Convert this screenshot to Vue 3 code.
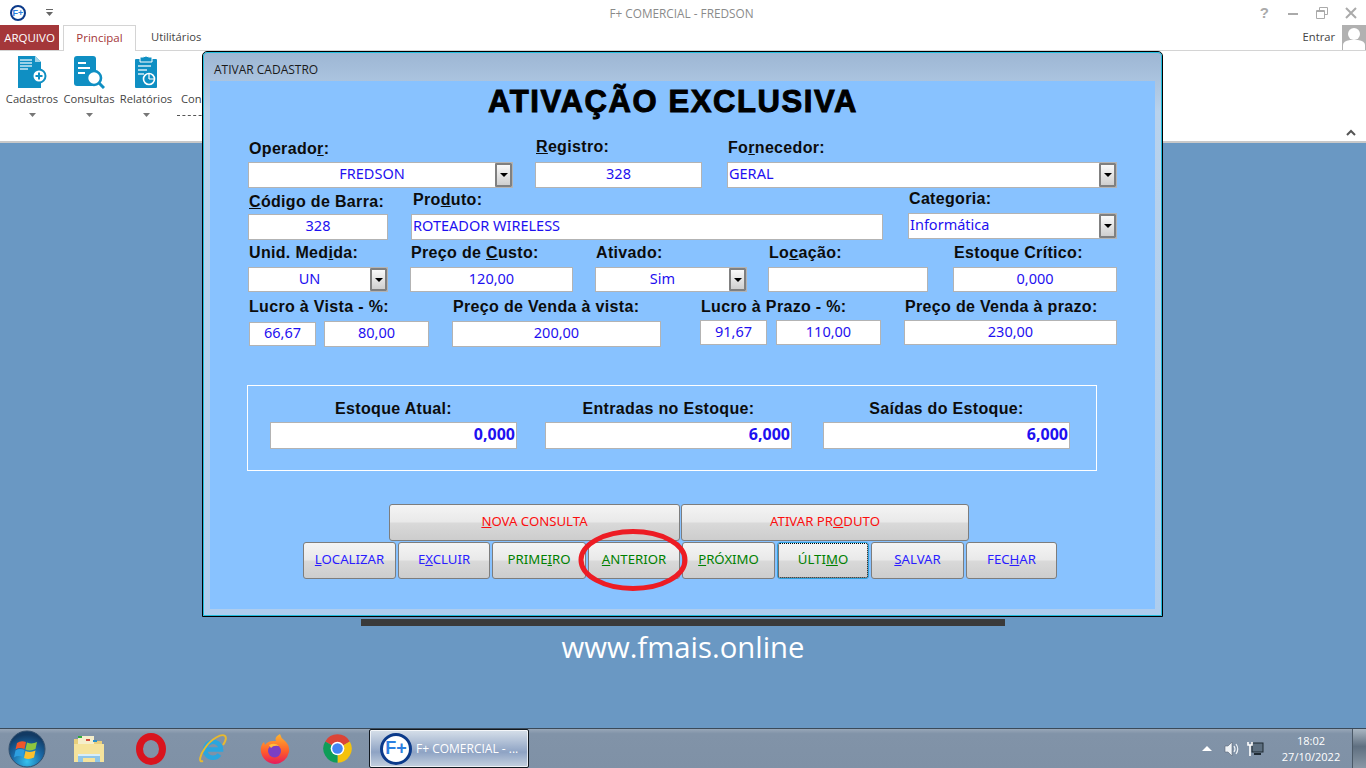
<script setup>
const ribbonItems = ["Cadastros", "Consultas", "Relatórios"];

// "&" marks the letter underlined as keyboard shortcut, as in the original form
const splitKey = (text) => {
  const i = text.indexOf("&");
  if (i < 0) return { before: text, key: "", after: "" };
  return { before: text.slice(0, i), key: text[i + 1], after: text.slice(i + 2) };
};

const formRows = [
  {
    height: 52,
    fields: [
      { label: "Operado&r:", labelGap: 4, width: 265, inputs: [{ value: "FREDSON", combo: true }] },
      { label: "&Registro:", labelGap: 6, left: 22, width: 167, inputs: [{ value: "328" }] },
      { label: "Fo&rnecedor:", labelGap: 5, left: 25, width: 390, inputs: [{ value: "GERAL", combo: true, start: true }] },
    ],
  },
  {
    height: 52,
    fields: [
      { label: "&Código de Barra:", labelGap: 3, width: 140, inputs: [{ value: "328" }] },
      { label: "Pro&duto:", labelGap: 5, indent: 2, left: 23, width: 472, inputs: [{ value: "ROTEADOR WIRELESS", start: true }] },
      { label: "Categoria:", labelGap: 5, left: 25, width: 209, raise: 1, inputs: [{ value: "Informática", combo: true, start: true }] },
    ],
  },
  {
    height: 52,
    fields: [
      { label: "Unid. Med&ida:", labelGap: 5, width: 140, inputs: [{ value: "UN", combo: true, height: 25 }] },
      { label: "Preço de &Custo:", labelGap: 5, left: 22, width: 163, inputs: [{ value: "120,00", height: 25 }] },
      { label: "Ativado:", labelGap: 5, left: 22, width: 152, inputs: [{ value: "Sim", combo: true, height: 25 }] },
      { label: "Lo&cação:", labelGap: 5, left: 21, width: 160, inputs: [{ value: "", height: 25 }] },
      { label: "Estoque Crítico:", labelGap: 5, left: 25, width: 164, inputs: [{ value: "0,000", height: 25 }] },
    ],
  },
  {
    height: 55,
    fields: [
      { label: "Lucro à Vista - %:", labelGap: 5, indent: 0, left: 1, width: 180, inputs: [{ value: "66,67", width: 67, height: 24 }, { value: "80,00", width: 105 }] },
      { label: "Preço de Venda à vista:", labelGap: 5, left: 23, width: 209, inputs: [{ value: "200,00" }] },
      { label: "Lucro à Prazo - %:", labelGap: 4, left: 39, width: 181, raise: 2, inputGap: 9, inputs: [{ value: "91,67", width: 67, height: 25 }, { value: "110,00", width: 105, height: 25 }] },
      { label: "Preço de Venda à prazo:", labelGap: 4, left: 23, width: 213, raise: 2, inputs: [{ value: "230,00", height: 25 }] },
    ],
  },
];

const stock = [
  { label: "Estoque Atual:", value: "0,000" },
  { label: "Entradas no Estoque:", value: "6,000" },
  { label: "Saídas do Estoque:", value: "6,000" },
];

const topButtons = [
  { text: "&NOVA CONSULTA", width: 291, color: "red" },
  { text: "ATIVAR PR&ODUTO", width: 288, color: "red" },
];

const bottomButtons = [
  { text: "&LOCALIZAR", width: 93, color: "blue" },
  { text: "E&XCLUIR", width: 92, color: "blue" },
  { text: "PRIME&IRO", width: 94, color: "green" },
  { text: "&ANTERIOR", width: 92, color: "green" },
  { text: "&PRÓXIMO", width: 93, color: "green" },
  { text: "ÚLTI&MO", width: 92, color: "green", focused: true },
  { text: "&SALVAR", width: 93, color: "blue" },
  { text: "FEC&HAR", width: 91, color: "blue" },
];
</script>

<template>
  <div class="screen">
    <header class="app-title">
      <div class="quick">
        <span class="logo small">F+</span>
        <svg class="qa-arrow" width="7" height="7" viewBox="0 0 7 7"><path d="M0 0h7v1H0zM0 3h7L3.5 7z" fill="#666" /></svg>
      </div>
      <div class="app-name">F+ COMERCIAL - FREDSON</div>
      <div class="controls">
        <span class="help">?</span>
        <svg width="12" height="12" viewBox="0 0 12 12"><rect x="1" y="6" width="10" height="2" fill="#aaa" /></svg>
        <svg width="12" height="12" viewBox="0 0 12 12" fill="none" stroke="#aaa"><path d="M3.5 3V.5h8v7H9M.5 3.5h8v8h-8zM.5 4.5h8" /></svg>
        <svg width="12" height="12" viewBox="0 0 12 12" stroke="#aaa" stroke-width="2"><path d="M1 1l10 10M11 1L1 11" /></svg>
      </div>
    </header>

    <nav class="tabs">
      <div class="tab-file">ARQUIVO</div>
      <div class="tab-active">Principal</div>
      <div class="tab">Utilitários</div>
      <div class="account">
        <span>Entrar</span>
        <svg class="avatar" width="24" height="25" viewBox="0 0 24 25">
          <rect width="24" height="25" fill="#b1b1b1" />
          <circle cx="12" cy="9" r="6" fill="#fff" />
          <path d="M1 25v-5q0-4 7-5h8q7 1 7 5v5z" fill="#fff" />
        </svg>
      </div>
    </nav>

    <section class="ribbon">
      <div v-for="(item, index) in ribbonItems" :key="item" class="ribbon-item">
        <svg v-if="index === 0" width="30" height="34" viewBox="0 0 30 34">
          <path d="M1 1h17l6 6v26H1z" fill="#0f8fc3" />
          <path d="M18 1v6h6z" fill="#9fd3e8" />
          <path d="M3 5h12M3 8h12M3 11h12M3 14h8" stroke="#cde8f3" stroke-width="1.4" />
          <circle cx="22" cy="21" r="6.5" fill="#fff" stroke="#0f8fc3" stroke-width="2" />
          <path d="M18.5 21h7M22 17.5v7" stroke="#0f8fc3" stroke-width="2" />
        </svg>
        <svg v-else-if="index === 1" width="32" height="34" viewBox="0 0 32 34">
          <rect x="1" y="1" width="22" height="30" rx="3" fill="#0f8fc3" />
          <path d="M5 8h8M5 13h12M5 18h7" stroke="#fff" stroke-width="2" />
          <circle cx="21" cy="23" r="7" fill="#fff" stroke="#0f8fc3" stroke-width="2.6" />
          <path d="M26 28l5 5" stroke="#0f8fc3" stroke-width="3" />
        </svg>
        <svg v-else width="24" height="34" viewBox="0 0 24 34">
          <rect x="1" y="4" width="22" height="29" rx="1" fill="#0f8fc3" />
          <path d="M6 2h3q3-2 6 0h3v5H6z" fill="#0f8fc3" stroke="#fff" />
          <path d="M4 11h13M4 15h9M4 19h6" stroke="#d5edf6" stroke-width="1.6" />
          <circle cx="15" cy="24" r="5.5" fill="#0f8fc3" stroke="#fff" stroke-width="1.6" />
          <path d="M15 24v-5M15 24h5" stroke="#fff" stroke-width="1.2" />
        </svg>
        <div class="ribbon-label">{{ item }}</div>
        <svg class="drop" width="7" height="4" viewBox="0 0 7 4"><path d="M0 0h7L3.5 4z" fill="#777" /></svg>
      </div>
      <div class="ribbon-cut">
        <div class="ribbon-label">Con</div>
        <div class="cut-dashes"></div>
      </div>
      <svg class="collapse" width="10" height="7" viewBox="0 0 10 7" fill="none" stroke="#555" stroke-width="2"><path d="M1 6l4-4 4 4" /></svg>
    </section>

    <main class="desktop">
      <div class="shadow-bar"></div>
      <div class="site">www.fmais.online</div>

      <div class="window">
        <div class="window-title">ATIVAR CADASTRO</div>
        <div class="window-body">
          <h1>ATIVAÇÃO EXCLUSIVA</h1>

          <div v-for="(row, r) in formRows" :key="r" class="form-row" :style="{ height: row.height + 'px' }">
            <div
              v-for="field in row.fields"
              :key="field.label"
              class="field"
              :style="{ width: field.width + 'px', marginLeft: (field.left || 0) + 'px', marginBottom: (field.raise || 0) + 'px' }"
            >
              <label :style="{ marginBottom: field.labelGap + 'px', paddingLeft: (field.indent ?? 1) + 'px' }">{{ splitKey(field.label).before }}<u>{{ splitKey(field.label).key }}</u>{{ splitKey(field.label).after }}</label>
              <div class="inputs" :style="field.inputGap ? { gap: field.inputGap + 'px' } : null">
                <div
                  v-for="input in field.inputs"
                  :key="input.value + field.label"
                  class="input"
                  :class="{ start: input.start }"
                  :style="{ height: (input.height || 26) + 'px', flex: input.width ? '0 0 ' + input.width + 'px' : '1' }"
                >
                  <span class="input-text">{{ input.value }}</span>
                  <span v-if="input.combo" class="combo-btn"><i></i></span>
                </div>
              </div>
            </div>
          </div>

          <div class="stock">
            <div v-for="item in stock" :key="item.label" class="stock-col">
              <label>{{ item.label }}</label>
              <div class="stock-value">{{ item.value }}</div>
            </div>
          </div>

          <div class="buttons top">
            <button v-for="b in topButtons" :key="b.text" :class="b.color" :style="{ width: b.width + 'px' }">
              {{ splitKey(b.text).before }}<u>{{ splitKey(b.text).key }}</u>{{ splitKey(b.text).after }}
            </button>
          </div>
          <div class="buttons bottom">
            <button v-for="b in bottomButtons" :key="b.text" :class="[b.color, { focused: b.focused }]" :style="{ width: b.width + 'px' }">
              {{ splitKey(b.text).before }}<u>{{ splitKey(b.text).key }}</u>{{ splitKey(b.text).after }}
            </button>
          </div>

          <svg class="highlight" width="112" height="66" viewBox="0 0 112 66">
            <ellipse cx="56" cy="33" rx="52" ry="28.5" fill="none" stroke="#ed1c24" stroke-width="5" />
          </svg>
        </div>
      </div>
    </main>

    <footer class="taskbar">
      <svg class="orb" width="38" height="38" viewBox="0 0 38 38">
        <defs>
          <radialGradient id="orbFill" cx="50%" cy="85%" r="75%">
            <stop offset="0" stop-color="#35c2ee" />
            <stop offset="0.55" stop-color="#1a6aa8" />
            <stop offset="1" stop-color="#123a63" />
          </radialGradient>
        </defs>
        <circle cx="19" cy="19" r="18" fill="url(#orbFill)" stroke="#33506e" />
        <path d="M9 13q4-3 9-1l-1.500 7q-5-2-9 .5z" fill="#f0562a" />
        <path d="M19 12.500q5 2 10-.5l-1.500 7q-5 2.500-10 .5z" fill="#8dc63f" />
        <path d="M7.500 20.500q4-2.500 9-.5l-1.500 7q-5-2-9 .5z" fill="#2d9fe0" />
        <path d="M17.500 21q5 2 10-.5L26 27.500q-5 2.500-10 .5z" fill="#fbc02d" />
      </svg>

      <div class="task-slot">
        <svg width="32" height="30" viewBox="0 0 32 30">
          <path d="M1 5h12l2 2h14v21H1z" fill="#e8cf7c" />
          <rect x="5" y="2" width="16" height="8" fill="#f5eecb" />
          <rect x="5" y="2" width="4" height="2" fill="#2faa3c" />
          <rect x="13" y="5" width="4" height="2" fill="#d24a3a" />
          <rect x="20" y="6" width="4" height="2" fill="#2a90c8" />
          <path d="M1 10h30v18H1z" fill="#f5e39c" />
          <path d="M5 28v-8h22v8h-5v-4H10v4z" fill="#8fc5e8" />
          <path d="M5 20h22v2H5z" fill="#d8eefa" />
        </svg>
      </div>
      <div class="task-slot">
        <svg width="30" height="32" viewBox="0 0 30 32">
          <ellipse cx="15" cy="16" rx="11.500" ry="12.500" fill="none" stroke="#d9141e" stroke-width="7" />
        </svg>
      </div>
      <div class="task-slot">
        <svg width="32" height="32" viewBox="0 0 32 32" fill="none">
          <path d="M8.500 16.500H24A8 8 0 1 0 22.500 21.500" stroke="#2ba6de" stroke-width="4.500" />
          <path d="M6 28C1 30 3 22 8 15C14 6 25 0 28 3c2 2 0 6-2 9" stroke="#e8b92f" stroke-width="2" />
        </svg>
      </div>
      <div class="task-slot">
        <svg width="32" height="32" viewBox="0 0 32 32">
          <defs>
            <linearGradient id="foxFill" x1="0" y1="0" x2="0" y2="1">
              <stop offset="0" stop-color="#ffb52e" />
              <stop offset="0.6" stop-color="#ff5a2b" />
              <stop offset="1" stop-color="#e5195f" />
            </linearGradient>
          </defs>
          <path d="M16 31A14.500 14.500 0 0 1 2 14q1-4 3-5l1 3q3-4 8-4h3q-2-4 4-7 1 4 4 6 6 5 5 12A15 15 0 0 1 16 31z" fill="url(#foxFill)" />
          <circle cx="15.500" cy="18" r="6.500" fill="#7b3fc4" />
          <path d="M10 12q6-3 10 1-6-1-8 2z" fill="#ffbe3c" />
        </svg>
      </div>
      <div class="task-slot">
        <svg width="31" height="31" viewBox="0 0 24 24">
          <path d="M12 12L2.470 6.500A11 11 0 0 1 21.530 6.500z" fill="#db4437" />
          <path d="M12 12L21.530 6.500A11 11 0 0 1 12 23z" fill="#f4c20d" />
          <path d="M12 12L12 23A11 11 0 0 1 2.470 6.500z" fill="#0f9d58" />
          <circle cx="12" cy="12" r="5.300" fill="#fff" />
          <circle cx="12" cy="12" r="4.100" fill="#4285f4" />
        </svg>
      </div>

      <div class="task-active">
        <span class="logo big">F+</span>
        <span class="task-label">F+ COMERCIAL - ...</span>
      </div>

      <div class="tray">
        <svg width="10" height="5" viewBox="0 0 10 5"><path d="M0 5L5 0l5 5z" fill="#fff" /></svg>
        <svg class="tray-speaker" width="17" height="16" viewBox="0 0 17 16" fill="none">
          <path d="M1 5h3l4-4v14l-4-4H1z" fill="#eef2f6" stroke="#5b6675" stroke-width="0.6" />
          <path d="M10 5q2 3 0 6M12 3q3.500 5 0 10" stroke="#eef2f6" stroke-width="1.200" />
        </svg>
        <svg class="tray-net" width="17" height="16" viewBox="0 0 17 16">
          <rect x="5" y="2" width="11" height="9" fill="#5c6e7f" stroke="#1f2a33" />
          <rect x="7" y="12" width="7" height="2" fill="#1f2a33" />
          <path d="M1 1v3h4V1M3 4v11" stroke="#fff" stroke-width="1.600" fill="none" />
        </svg>
        <div class="clock">
          <div>18:02</div>
          <div>27/10/2022</div>
        </div>
        <div class="show-desktop"></div>
      </div>
    </footer>
  </div>
</template>

<style scoped>
.screen {
  width: 1366px;
  height: 768px;
  overflow: hidden;
  display: flex;
  flex-direction: column;
  background: #fff;
  font-family: "Open Sans", "Liberation Sans", sans-serif;
}

.app-title {
  height: 25px;
  display: grid;
  grid-template-columns: 1fr auto 1fr;
  align-items: center;
}

.quick {
  display: flex;
  align-items: center;
  padding-left: 10px;
}

.qa-arrow {
  margin-left: 20px;
}

.app-name {
  font-size: 11.8px;
  color: #8a8a8a;
  margin-left: -3px;
}

.controls {
  display: flex;
  justify-content: flex-end;
  align-items: center;
  gap: 17px;
  padding-right: 9px;
}

.help {
  font: bold 15px "Liberation Sans", sans-serif;
  color: #aaa;
  margin-right: 1px;
}

.logo {
  display: inline-flex;
  align-items: center;
  justify-content: center;
  flex: none;
  border-radius: 50%;
  background: #fff;
  border-style: solid;
  border-color: #0b3a8a;
  color: #2d7fe0;
  font-family: "Liberation Sans", sans-serif;
  font-weight: bold;
  box-sizing: border-box;
}

.logo.small {
  width: 16px;
  height: 16px;
  border-width: 2px;
  font-size: 9px;
}

.logo.big {
  width: 32px;
  height: 32px;
  border-width: 3px;
  font-size: 18px;
}

.tabs {
  height: 26px;
  box-sizing: border-box;
  display: flex;
  align-items: stretch;
  border-bottom: 1px solid #d4d4d4;
  font-size: 11.5px;
}

.tab-file {
  width: 59px;
  padding-bottom: 1px;
  box-sizing: border-box;
  background: #a4373a;
  color: #fff;
  display: flex;
  align-items: center;
  justify-content: center;
}

.tab-active {
  width: 73px;
  margin-left: 4px;
  margin-bottom: -1px;
  padding-bottom: 3px;
  box-sizing: border-box;
  background: #fff;
  border: 1px solid #d4d4d4;
  border-bottom: none;
  color: #a4373a;
  display: flex;
  align-items: center;
  justify-content: center;
}

.tab {
  margin-left: 15px;
  padding-bottom: 2px;
  font-size: 11.2px;
  color: #444;
  display: flex;
  align-items: center;
}

.account {
  margin-left: auto;
  display: flex;
  align-items: center;
  gap: 7px;
  font-size: 11.2px;
  color: #444;
}

.account span {
  padding-bottom: 2px;
}

.avatar {
  display: block;
}

.ribbon {
  height: 92px;
  box-sizing: border-box;
  display: flex;
  padding: 4px 0 0 6px;
  gap: 5px;
  position: relative;
  border-bottom: 2px solid #c9c9c9;
}

.ribbon-item {
  width: 52px;
  display: flex;
  flex-direction: column;
  align-items: center;
}

.ribbon-item svg:first-child {
  height: 34px;
}

.ribbon-label {
  font-size: 11.2px;
  color: #444;
  line-height: 16px;
  margin-top: 2px;
  white-space: nowrap;
}

.drop {
  margin-top: 6px;
}

.ribbon-cut {
  margin-left: -1px;
  padding-top: 34px;
  width: 30px;
  padding-left: 5px;
  box-sizing: border-box;
  overflow: hidden;
}

.cut-dashes {
  width: 30px;
  margin-left: -4px;
  margin-top: 8px;
  border-top: 1px dashed #555;
}

.collapse {
  position: absolute;
  right: 10px;
  bottom: 5px;
}

.desktop {
  flex: 1;
  background: #6a98c3;
  position: relative;
  display: flex;
  flex-direction: column;
  align-items: center;
  padding-top: 476px;
}

.shadow-bar {
  width: 644px;
  height: 7px;
  background: #3a3a3a;
}

.site {
  margin-top: 1px;
  font-size: 29.3px;
  line-height: 40px;
  color: #fff;
}

/* the dialog floats over the desktop */
.window {
  position: absolute;
  left: 202px;
  top: -92px;
  width: 961px;
  height: 566px;
  box-sizing: border-box;
  border: 1px solid #000;
  border-top-width: 1px;
  border-radius: 5px 5px 0 0;
  outline: 1px solid #20bcdc;
  outline-offset: -2px;
  background: linear-gradient(#9db6d3, #b9d2ec 60px, #aecdee);
  display: flex;
  flex-direction: column;
  padding: 0 7px 7px;
}

.window-title {
  height: 29px;
  padding: 8px 4px 0;
  box-sizing: border-box;
  font-size: 12px;
  line-height: 20px;
  color: #1a1a1a;
}

.window-body {
  flex: 1;
  background: #88c2ff;
  position: relative;
  font-family: "Liberation Sans", Arial, sans-serif;
}

h1 {
  margin: 0;
  height: 55px;
  padding: 4px 19px 0 0;
  box-sizing: border-box;
  text-align: center;
  font-size: 31px;
  line-height: 34px;
  font-weight: 900;
  -webkit-text-stroke: 1px #000;
  letter-spacing: 1.6px;
  color: #000;
}

.form-row {
  display: flex;
  align-items: flex-end;
  padding-left: 38px;
}

.field {
  flex: none;
  display: flex;
  flex-direction: column;
}

label {
  display: block;
  font-size: 16px;
  line-height: 18px;
  letter-spacing: 0.33px;
  font-weight: bold;
  color: #0c0c0c;
  white-space: nowrap;
}

.inputs {
  display: flex;
  align-items: center;
  gap: 8px;
}

.input {
  box-sizing: border-box;
  background: #fff;
  border: 1px solid #b3b3b3;
  display: flex;
  align-items: stretch;
  font-family: "Noto Sans", sans-serif;
  font-size: 14.5px;
  color: #1e10f0;
}

.input-text {
  flex: 1;
  display: flex;
  align-items: center;
  justify-content: center;
  padding-bottom: 4px;
  white-space: nowrap;
}

.input.start .input-text {
  justify-content: flex-start;
  padding-left: 1px;
}

.combo-btn {
  width: 17px;
  box-sizing: border-box;
  border: 2px solid #808080;
  border-radius: 1px;
  background: linear-gradient(#fafafa, #cfcfcf);
  display: flex;
  align-items: center;
  justify-content: center;
}

.combo-btn i {
  width: 0;
  height: 0;
  border: 4px solid transparent;
  border-top: 4px solid #000;
  border-bottom: 0;
}

.stock {
  margin: 38px 0 0 37px;
  width: 850px;
  height: 86px;
  box-sizing: border-box;
  border: 1px solid #fff;
  padding: 14px 0 0 22px;
  display: flex;
  gap: 28px;
}

.stock-col {
  width: 247px;
  text-align: center;
}

.stock-col:last-child {
  margin-left: 3px;
}

.stock-col label {
  margin-bottom: 4px;
}

.stock-value {
  height: 27px;
  box-sizing: border-box;
  background: #fff;
  border: 1px solid #b3b3b3;
  text-align: right;
  font: bold 16px/23px "Noto Sans", sans-serif;
  color: #1e10f0;
  padding-right: 1px;
}

.buttons {
  display: flex;
  gap: 2px;
}

.buttons.top {
  margin: 33px 0 1px 179px;
  gap: 1px;
}

.buttons.bottom {
  margin-left: 93px;
}

button {
  height: 37px;
  padding: 0 0 3px;
  border: 1px solid #7d7d7d;
  border-radius: 3px;
  background: linear-gradient(#f4f4f4, #e9e9e9 48%, #d9d9d9 52%, #cdcdcd);
  font-family: "Noto Sans", sans-serif;
  font-size: 13.2px;
}

button.blue {
  color: #2a1cff;
}

button.red {
  color: #fb0f0f;
}

button.green {
  color: #008000;
}

button.focused {
  border-color: #2f9fd8;
  outline: 1px dotted #000;
  outline-offset: -2px;
}

.highlight {
  position: absolute;
  left: 367px;
  top: 446px;
  pointer-events: none;
}

.taskbar {
  height: 40px;
  flex: none;
  box-sizing: border-box;
  border-top: 1px solid #3b4a59;
  background: linear-gradient(#98a7b8, #8193a8 12%, #7f91a6);
  display: flex;
  align-items: center;
}

.orb {
  margin-left: 8px;
  margin-right: 12px;
  flex: none;
}

.task-slot {
  width: 62px;
  flex: none;
  display: flex;
  justify-content: center;
}

.task-active {
  width: 160px;
  height: 39px;
  margin-left: 1px;
  box-sizing: border-box;
  border: 1px solid #101820;
  border-radius: 2px;
  background: linear-gradient(#d7e0ea, #8ea3c4 60%, #c5d1df);
  display: flex;
  align-items: center;
  padding-left: 10px;
  gap: 4px;
  box-shadow: inset 0 0 0 1px rgba(255, 255, 255, 0.7);
}

.task-label {
  font-size: 12px;
  color: #fff;
  white-space: nowrap;
}

.tray {
  margin-left: auto;
  display: flex;
  align-items: center;
  height: 100%;
}

.tray-speaker {
  margin-left: 12px;
}

.tray-net {
  margin-left: 6px;
}

.clock {
  width: 70px;
  margin-left: 12px;
  text-align: center;
  font-size: 11px;
  line-height: 16px;
  color: #fff;
}

.show-desktop {
  width: 14px;
  height: 100%;
  margin-left: 6px;
  background: linear-gradient(#a9b6c2, #5f6f80 45%, #8a98a6);
  border-left: 1px solid #4b5967;
  box-sizing: border-box;
}
</style>
